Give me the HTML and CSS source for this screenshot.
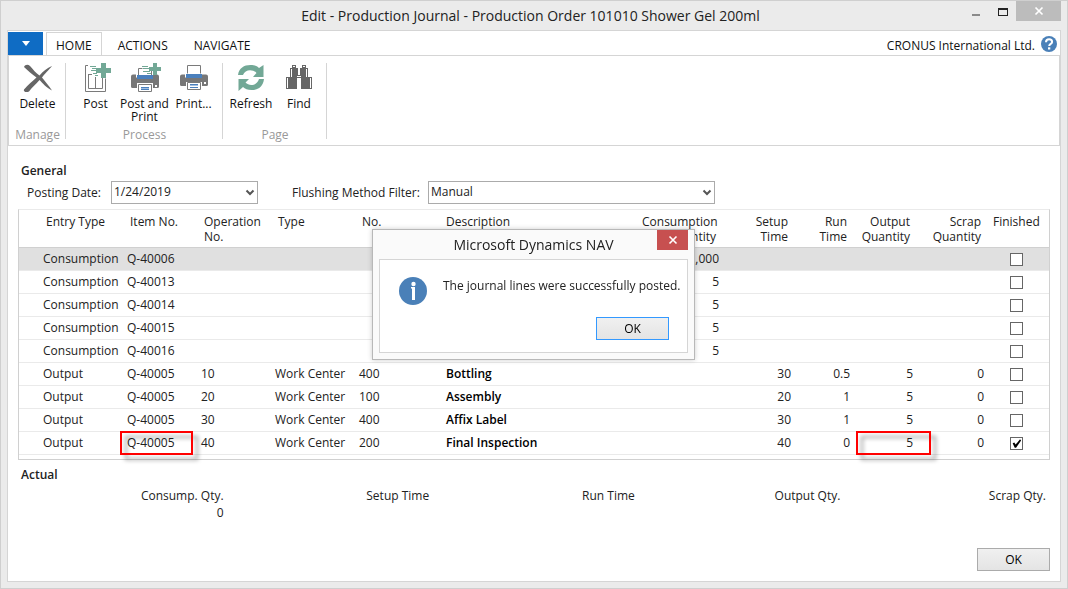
FILE: index.html
```html
<!DOCTYPE html>
<html lang="en">
<head>
<meta charset="utf-8">
<title>Edit - Production Journal</title>
<link rel="stylesheet" href="styles.css">
</head>
<body>
<div class="window">
  <header class="titlebar">
    <h1 class="window-title">Edit - Production Journal - Production Order 101010 Shower Gel 200ml</h1>
    <div class="window-controls">
      <button class="control" type="button" aria-label="Minimize"><svg width="10" height="12" viewBox="0 0 10 12"><path d="M1 9h8v2H1z" fill="#8a8a8a"/></svg></button>
      <button class="control" type="button" aria-label="Maximize"><svg width="10" height="12" viewBox="0 0 10 12"><path d="M0 3h10v8H0zM1 5v5h8V5z" fill="#222" fill-rule="evenodd"/></svg></button>
      <button class="control control-close" type="button" aria-label="Close"><svg width="8" height="8" viewBox="0 0 8 8"><path d="M.5.5l7 7M7.5.5l-7 7" stroke="#fff" stroke-width="1.7"/></svg></button>
    </div>
  </header>

  <main class="client">
    <nav class="tabs">
      <button class="app-menu" type="button" aria-label="Application menu"><svg width="8" height="5" viewBox="0 0 8 5"><path d="M0 0h8L4 5z" fill="#fff"/></svg></button>
      <button class="tab tab-active" type="button">HOME</button>
      <button class="tab" type="button">ACTIONS</button>
      <button class="tab" type="button">NAVIGATE</button>
      <span class="company">CRONUS International Ltd.</span>
      <button class="help" type="button" aria-label="Help"><svg width="16" height="16" viewBox="0 0 16 16"><circle cx="8" cy="8" r="8" fill="#4a80b8"/><path d="M5 6.2C5 4.200 6.200 3.200 8.100 3.200S11.100 4.300 11.100 5.900C11.100 7.900 8.200 7.900 8.200 10" fill="none" stroke="#fff" stroke-width="2"/><path d="M7 11.300h2.300v2.200H7z" fill="#fff"/></svg></button>
    </nav>

    <section class="ribbon">
      <div class="group group-manage">
        <div class="group-buttons">
          <button class="tool" type="button"><svg width="30" height="30" viewBox="0 0 30 30"><path d="M1 4C2 1.500 5 1 7 3c3 3.500 6 7 9.500 9.500C20 8.500 24 5 29 3c-1 2-6 6-10 11.500 3 4 7 8 10 13-6-3-9-7-12.500-10.500C13 21 9 24.500 6 28.500c-3 1.500-6 0-5-2C5 22 9 18.500 13.500 14.500 9 11 5 8 1 4z" fill="#666"/></svg><span>Delete</span></button>
        </div>
        <div class="group-name">Manage</div>
      </div>
      <div class="group group-process">
        <div class="group-buttons">
          <button class="tool" type="button"><svg width="30" height="30" viewBox="0 0 30 30"><path d="M7 2.500H4.500v26h20v-13M7.500 11v14.500h14V15M11 11.500H7.500M14.500 14v11" fill="none" stroke="#7a7a7a"/><path d="M9 3.500h6M11 5.500h4M10 7.500h5M12 10.500h4M14 12.500h3" stroke="#72a896"/><path d="M20 0h5v5h5v5h-5v5h-5v-5h-5V5h5z" fill="#72a896"/></svg><span>Post</span></button>
          <button class="tool tool-wide" type="button"><svg width="30" height="30" viewBox="0 0 30 30"><path d="M1 13.500q0-2 2-2h3v3h17v-3h4q2 0 2 2v10q0 1.500-1.500 1.500H23v-5H7v5H2.500Q1 25 1 23.500z" fill="#777"/><path d="M7 12h16v4H7z" fill="#4a80bd"/><path d="M8.500 12V5.500h13V12z" fill="#fff"/><path d="M8.500 12V5.500h4M21.500 8v4M8.500 21.500h13v7h-13z" fill="#fff" stroke="#7a7a7a"/><path d="M11 24h8v1.500h-8zM11 26h8v1h-8z" fill="#4a80bd"/><path d="M12 3.500h6M13 5.500h6M13 8.500h7M17 10.500h4" stroke="#72a896"/><path d="M23 0h4v4h4v4h-4v4h-4V8h-4V4h4z" fill="#72a896"/><path d="M25 22h2v2h-2z" fill="#fff"/></svg><span>Post and Print</span></button>
          <button class="tool" type="button"><svg width="30" height="30" viewBox="0 0 30 30"><path d="M1 13.500q0-2 2-2h3v3h17v-3h4q2 0 2 2v8q0 1.500-1.500 1.500H23v-4H7v4H2.500Q1 23 1 21.500z" fill="#777"/><path d="M7 11h16v4H7z" fill="#4a80bd"/><path d="M8.500 10.500v-8h13v8M8.500 19.500h13v7h-13z" fill="#fff" stroke="#7a7a7a"/><path d="M11 21h8v1.500h-8zM11 24h8v1h-8z" fill="#4a80bd"/><path d="M25 19h2v2h-2z" fill="#fff"/></svg><span>Print...</span></button>
        </div>
        <div class="group-name">Process</div>
      </div>
      <div class="group group-page">
        <div class="group-buttons">
          <button class="tool" type="button"><svg width="30" height="30" viewBox="0 0 30 30"><g fill="#72a896"><path d="M2 12C3 5 8 2 14.500 2c4 0 6.500 1 8.500 3l4.500-3v12H17l3.500-4C17 6 9 6 7 12z"/><path d="M28 16c-1 8-6 11-12.500 11-4 0-6.500-1-8.500-3l-4.500 4V16H13l-3.500 3.500C13 23.500 21 23 23 16z"/></g></svg><span>Refresh</span></button>
          <button class="tool" type="button"><svg width="30" height="30" viewBox="0 0 30 30"><path d="M8 2h4v3h2v7h2V5h2V2h4v3h2v9h4v12H17V15h-4v11H2V14h4V5h2z" fill="#666"/><path d="M3.500 15v10M26.500 15v10M7.500 6v8M22.500 6v8M13 13.500h4M9 3.500h2M19 3.500h2" stroke="#fff"/></svg><span>Find</span></button>
        </div>
        <div class="group-name">Page</div>
      </div>
    </section>

    <form class="page">
      <h2 class="heading">General</h2>
      <div class="filters">
        <label class="label-date" for="posting-date">Posting Date:</label>
        <span class="combo combo-date"><select id="posting-date"><option>1/24/2019</option></select><svg width="8" height="6" viewBox="0 0 8 6"><path d="M.5.5L4 4 7.500.5" fill="none" stroke="#555" stroke-width="2"/></svg></span>
        <label class="label-method" for="method">Flushing Method Filter:</label>
        <span class="combo combo-method"><select id="method"><option>Manual</option></select><svg width="8" height="6" viewBox="0 0 8 6"><path d="M.5.5L4 4 7.500.5" fill="none" stroke="#555" stroke-width="2"/></svg></span>
      </div>

      <div class="grid-frame">
        <table class="lines">
          <colgroup><col class="c-entry"><col class="c-item"><col class="c-op"><col class="c-type"><col class="c-no"><col><col class="c-cons"><col class="c-setup"><col class="c-run"><col class="c-output"><col class="c-scrap"><col class="c-done"></colgroup>
          <thead>
            <tr><th>Entry Type</th><th>Item No.</th><th>Operation No.</th><th>Type</th><th>No.</th><th>Description</th><th class="num">Consumption Quantity</th><th class="num">Setup Time</th><th class="num">Run Time</th><th class="num">Output Quantity</th><th class="num">Scrap Quantity</th><th>Finished</th></tr>
          </thead>
          <tbody>
            <tr class="selected"><td>Consumption</td><td>Q-40006</td><td></td><td></td><td></td><td></td><td class="num">1,000</td><td></td><td></td><td></td><td></td><td class="done"><input type="checkbox" aria-label="Finished"></td></tr>
            <tr><td>Consumption</td><td>Q-40013</td><td></td><td></td><td></td><td></td><td class="num">5</td><td></td><td></td><td></td><td></td><td class="done"><input type="checkbox" aria-label="Finished"></td></tr>
            <tr><td>Consumption</td><td>Q-40014</td><td></td><td></td><td></td><td></td><td class="num">5</td><td></td><td></td><td></td><td></td><td class="done"><input type="checkbox" aria-label="Finished"></td></tr>
            <tr><td>Consumption</td><td>Q-40015</td><td></td><td></td><td></td><td></td><td class="num">5</td><td></td><td></td><td></td><td></td><td class="done"><input type="checkbox" aria-label="Finished"></td></tr>
            <tr><td>Consumption</td><td>Q-40016</td><td></td><td></td><td></td><td></td><td class="num">5</td><td></td><td></td><td></td><td></td><td class="done"><input type="checkbox" aria-label="Finished"></td></tr>
            <tr><td>Output</td><td>Q-40005</td><td>10</td><td>Work Center</td><td>400</td><td class="desc">Bottling</td><td></td><td class="num">30</td><td class="num">0.5</td><td class="num">5</td><td class="num">0</td><td class="done"><input type="checkbox" aria-label="Finished"></td></tr>
            <tr><td>Output</td><td>Q-40005</td><td>20</td><td>Work Center</td><td>100</td><td class="desc">Assembly</td><td></td><td class="num">20</td><td class="num">1</td><td class="num">5</td><td class="num">0</td><td class="done"><input type="checkbox" aria-label="Finished"></td></tr>
            <tr><td>Output</td><td>Q-40005</td><td>30</td><td>Work Center</td><td>400</td><td class="desc">Affix Label</td><td></td><td class="num">30</td><td class="num">1</td><td class="num">5</td><td class="num">0</td><td class="done"><input type="checkbox" aria-label="Finished"></td></tr>
            <tr><td>Output</td><td class="marked">Q-40005<span class="mark mark-item"></span></td><td>40</td><td>Work Center</td><td>200</td><td class="desc">Final Inspection</td><td></td><td class="num">40</td><td class="num">0</td><td class="num marked">5<span class="mark mark-output"></span></td><td class="num">0</td><td class="done"><input type="checkbox" aria-label="Finished" checked></td></tr>
          </tbody>
        </table>
      </div>

      <h2 class="heading">Actual</h2>
      <dl class="totals">
        <div><dt>Consump. Qty.</dt><dd>0</dd></div>
        <div><dt>Setup Time</dt><dd></dd></div>
        <div><dt>Run Time</dt><dd></dd></div>
        <div><dt>Output Qty.</dt><dd></dd></div>
        <div><dt>Scrap Qty.</dt><dd></dd></div>
      </dl>
      <footer class="actions"><button class="push" type="button">OK</button></footer>
    </form>
  </main>
</div>

<div class="overlay">
  <section class="dialog" role="dialog" aria-labelledby="dialog-title">
    <header class="dialog-bar">
      <h2 class="dialog-title" id="dialog-title">Microsoft Dynamics NAV</h2>
      <button class="dialog-close" type="button" aria-label="Close"><svg width="8" height="8" viewBox="0 0 8 8"><path d="M.5.5l7 7M7.500.5l-7 7" stroke="#fff" stroke-width="1.600"/></svg></button>
    </header>
    <div class="dialog-body">
      <div class="message">
        <svg width="28" height="28" viewBox="0 0 28 28"><circle cx="14" cy="14" r="14" fill="#4a80b8"/><circle cx="14.500" cy="7" r="2.200" fill="#fff"/><path d="M12 10h4v13h-3V11.500h-1z" fill="#fff"/></svg>
        <p>The journal lines were successfully posted.</p>
      </div>
      <button class="push push-default" type="button">OK</button>
    </div>
  </section>
</div>
</body>
</html>
```
FILE: styles.css
```css
* { box-sizing: border-box; }

body {
  margin: 0;
  font: 12px/15px "Open Sans", "Noto Sans", sans-serif;
  color: #222;
  background: #ebebeb;
}

button, select { font: inherit; color: inherit; }
button { padding: 0; border: 0; background: none; }
svg { display: block; overflow: visible; }
h1, h2, p, dl, dd { margin: 0; }

.window {
  display: flex;
  flex-direction: column;
  min-height: 100vh;
  padding: 0 6px;
  border: 1px solid #cfcfcf;
  border-bottom-width: 1px;
  padding-bottom: 6px;
}

.titlebar { display: flex; height: 29px; }
.window-title {
  flex: 1;
  padding-left: 92px;
  font-size: 14px;
  font-weight: 400;
  line-height: 30px;
  text-align: center;
}
.window-controls { display: flex; align-items: flex-start; }
.control { display: grid; place-items: center; width: 27px; height: 20px; }
.control-close { width: 45px; background: #bcbcbc; }

.client {
  flex: 1;
  display: flex;
  flex-direction: column;
  border: 1px solid #d5d5d5;
  background: #fff;
}

.tabs { display: flex; height: 24px; padding: 1px 3px 0 0; color: #111; }
.app-menu { display: grid; place-items: center; width: 35px; margin-right: 3px; background: #0f6cc4; }
.tab { padding: 2px 12px 0; border: solid transparent; border-width: 1px 1px 0; }
.tab-active {
  padding: 2px 9px 0;
  margin: 0 3px -1px 0;
  border-color: #d5d5d5;
  background: #fff;
}
.company { margin-left: auto; padding: 6px 6px 0 0; }
.help { align-self: flex-start; margin-top: 4px; }

.ribbon {
  display: flex;
  height: 91px;
  padding: 7px 0 4px;
  border: 1px solid #d5d5d5;
}
.group {
  display: flex;
  flex-direction: column;
  justify-content: space-between;
  background: linear-gradient(#d5d5d5, #d5d5d5) right top / 1px 76px no-repeat;
}
.group-manage { width: 57px; }
.group-process { width: 157px; }
.group-page { width: 104px; }
.group-buttons { display: flex; align-items: flex-start; justify-content: center; }
.tool {
  display: flex;
  flex-direction: column;
  align-items: center;
  gap: 4px;
  width: 48px;
  color: #111;
  line-height: 13px;
}
.tool-wide { width: 50px; }
.group-name { color: #999; text-align: center; line-height: 12px; }

.page {
  flex: 1;
  display: flex;
  flex-direction: column;
  padding: 17px 10px;
  padding-bottom: 10px;
}
.heading { padding-left: 3px; font-size: 12px; font-weight: 600; line-height: 16px; }

.filters { display: flex; align-items: center; padding: 2px 0 5px 9px; }
.label-date { width: 84px; }
.label-method { width: 136px; }
.combo { display: grid; align-items: center; height: 23px; }
.combo > * { grid-area: 1 / 1; }
.combo select {
  appearance: none;
  width: 100%;
  height: 100%;
  padding: 0 20px 2px 2px;
  border: 1px solid #ababab;
  border-radius: 0;
  background: #fff;
}
.combo svg { justify-self: end; margin-right: 4px; pointer-events: none; }
.combo-date { width: 147px; margin-right: 34px; }
.combo-method { width: 287px; }

.grid-frame {
  margin-bottom: 7px;
  padding-bottom: 4px;
  border: 1px solid #d0d0d0;
  border-top-color: #eaeaea;
}
.lines { width: 100%; table-layout: fixed; border-collapse: separate; border-spacing: 0; }
.c-entry { width: 105px; }
.c-item, .c-op { width: 74px; }
.c-type, .c-no { width: 84px; }
.c-cons { width: 86px; }
.c-setup { width: 72px; }
.c-run { width: 59px; }
.c-output { width: 63px; }
.c-scrap { width: 71px; }
.c-done { width: 62px; }

.lines th {
  height: 38px;
  padding: 4px 6px 3px;
  border-bottom: 1px solid #d0d0d0;
  font-weight: 400;
  text-align: left;
  vertical-align: top;
}
.lines td {
  height: 23px;
  padding: 0 3px 2px;
  border-bottom: 1px solid #eaeaea;
  white-space: nowrap;
}
.lines th:first-child { padding-left: 27px; }
.lines td:first-child { padding-left: 24px; }
.lines .num { text-align: right; }
.lines .desc { padding-left: 6px; color: #000; font-weight: 600; }
.lines .done { padding: 0 0 0 23px; }
.selected td { background: #e0e0e0; }

.lines input {
  appearance: none;
  display: block;
  width: 13px;
  height: 13px;
  margin: 1px 0 0;
  border: 1px solid #666;
  background: #fff;
}
.lines input:checked::before {
  content: "";
  display: block;
  width: 11px;
  height: 11px;
  background: #000;
  clip-path: polygon(15% 48%, 30% 42%, 42% 60%, 82% 12%, 92% 22%, 46% 88%, 34% 88%);
}

.marked { position: relative; }
.mark {
  position: absolute;
  z-index: 1;
  border: 2px solid #ff0000;
  filter: drop-shadow(5px 5px 2px rgba(0, 0, 0, .4));
  pointer-events: none;
}
.mark-item { inset: -1px 5px -1px -4px; }
.mark-output { inset: -1px -15px -1px 3px; }

.totals { display: grid; grid-template-columns: repeat(5, 1fr); padding: 4px 4px 0 0; text-align: right; }
.totals dt, .totals dd { line-height: 17px; }

.actions { display: flex; justify-content: flex-end; margin-top: auto; }
.push {
  width: 73px;
  height: 23px;
  border: 1px solid #ababab;
  background: linear-gradient(#f0f0f0, #e4e4e4);
  color: #000;
}
.push-default { border-color: #3399ff; }

.overlay {
  position: fixed;
  z-index: 2;
  inset: 0;
  display: grid;
  place-items: center;
  padding-right: 1px;
}
.dialog {
  width: 323px;
  padding: 0 6px 6px;
  border: 1px solid #b8b8b8;
  background: #fafafa;
  box-shadow: 0 0 5px rgba(0, 0, 0, .2);
}
.dialog-bar { display: flex; height: 29px; }
.dialog-title { flex: 1; padding-left: 31px; font-size: 14px; font-weight: 400; line-height: 29px; text-align: center; }
.dialog-close { display: grid; place-items: center; width: 31px; height: 20px; background: #c75050; }
.dialog-body {
  display: flex;
  flex-direction: column;
  gap: 12px;
  padding: 17px 18px 12px 19px;
  border: 1px solid #d5d5d5;
  background: #fff;
}
.message { display: flex; gap: 16px; }
.message p { padding-top: 1px; white-space: nowrap; }
.dialog-body .push { align-self: flex-end; }
```
